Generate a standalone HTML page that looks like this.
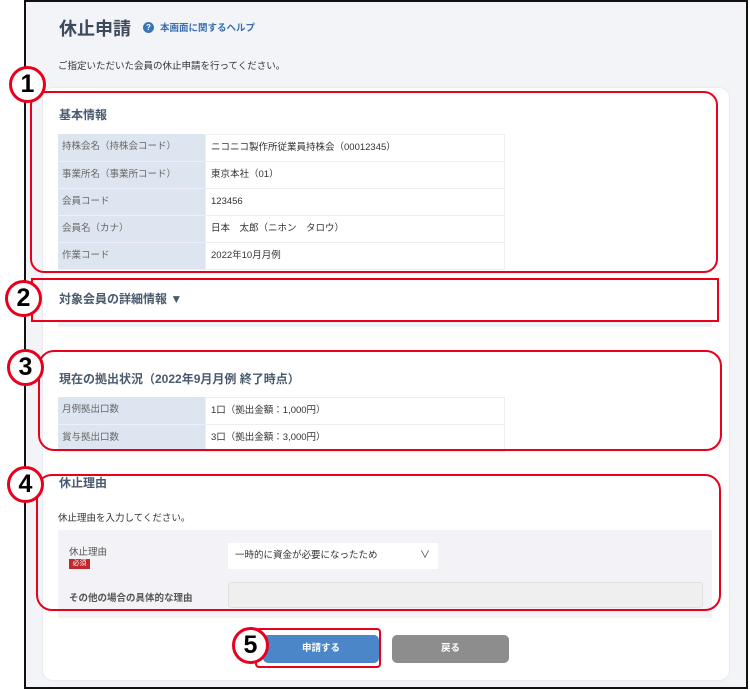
<!DOCTYPE html>
<html><head><meta charset="utf-8"><style>
*{margin:0;padding:0;box-sizing:border-box}
body{width:750px;height:690px;background:#fff;font-family:"Liberation Sans","Noto Sans CJK JP",sans-serif;position:relative;overflow:hidden;color:#333}
.a{position:absolute}
#frame{left:24px;top:0;width:724px;height:689px;border:2px solid #111;background:#f3f4f8}
.card{background:#fff;border-radius:10px;box-shadow:0 0 2px #ddd}
.t{font-size:10px;color:#333;white-space:nowrap}
.lab{background:#dde6f0;color:#666;font-size:9.5px;padding-left:4px;line-height:26px;border-bottom:1px solid #eef}
.val{background:#fff;font-size:9.5px;padding-left:5px;line-height:26px;border:1px solid #eceff2;border-top:none}
.r{position:absolute;border:2px solid #e8001c}
.c{position:absolute;width:37px;height:37px;border:3px solid #e8001c;border-radius:50%;background:#fff;font:bold 25px/31px "Liberation Sans",sans-serif;text-align:center;color:#000}
h2{font-size:12px;color:#4a5a6e;font-weight:bold;position:absolute;white-space:nowrap}
</style></head><body>
<div class="a" id="frame"></div>
<div class="a t" style="left:59px;top:15px;font-size:18px;color:#3c4a5c;font-weight:bold">休止申請</div>
<div class="a" style="left:143px;top:22px;width:11px;height:11px;border-radius:50%;background:#3a74b8;color:#fff;font-size:8px;line-height:11px;text-align:center;font-weight:bold">?</div>
<div class="a t" style="left:160px;top:20px;font-size:9.5px;color:#3a6fb0;font-weight:bold">本画面に関するヘルプ</div>
<div class="a t" style="left:58px;top:58px;font-size:9.5px">ご指定いただいた会員の休止申請を行ってください。</div>
<div class="a card" style="left:43px;top:88px;width:686px;height:592px"></div>
<div class="a" style="left:58px;top:322px;width:654px;height:5px;background:#f0f1f4"></div>
<h2 style="left:59px;top:106px">基本情報</h2>
<div class="a" style="left:58px;top:134px;width:447px">
<div style="display:flex"><div class="lab" style="width:147px">持株会名（持株会コード）</div><div class="val" style="width:300px;border-top:1px solid #eceff2">ニコニコ製作所従業員持株会（00012345）</div></div>
<div style="display:flex"><div class="lab" style="width:147px">事業所名（事業所コード）</div><div class="val" style="width:300px">東京本社（01）</div></div>
<div style="display:flex"><div class="lab" style="width:147px">会員コード</div><div class="val" style="width:300px">123456</div></div>
<div style="display:flex"><div class="lab" style="width:147px">会員名（カナ）</div><div class="val" style="width:300px">日本　太郎（ニホン　タロウ）</div></div>
<div style="display:flex"><div class="lab" style="width:147px">作業コード</div><div class="val" style="width:300px">2022年10月月例</div></div>
</div>
<h2 style="left:59px;top:290px">対象会員の詳細情報 ▼</h2>
<h2 style="left:59px;top:370px">現在の拠出状況（2022年9月月例 終了時点）</h2>
<div class="a" style="left:58px;top:397px;width:447px">
<div style="display:flex"><div class="lab" style="width:147px">月例拠出口数</div><div class="val" style="width:300px;border-top:1px solid #eceff2">1口（拠出金額：1,000円）</div></div>
<div style="display:flex"><div class="lab" style="width:147px">賞与拠出口数</div><div class="val" style="width:300px">3口（拠出金額：3,000円）</div></div>
</div>
<h2 style="left:59px;top:474px">休止理由</h2>
<div class="a t" style="left:58px;top:510px;font-size:9.5px">休止理由を入力してください。</div>
<div class="a" style="left:58px;top:530px;width:654px;height:88px;background:#f3f3f7"></div>
<div class="a t" style="left:69px;top:544px;font-size:9.5px;color:#555">休止理由</div>
<div class="a" style="left:69px;top:559px;width:21px;height:10px;background:#c0282d;color:#fff;font-size:7px;line-height:10px;text-align:center">必須</div>
<div class="a" style="left:228px;top:543px;width:210px;height:26px;background:#fff;font-size:9.5px;line-height:26px;padding-left:7px">一時的に資金が必要になったため<span style="position:absolute;right:8px;top:0;font-size:10px">∨</span></div>
<div class="a t" style="left:69px;top:590px;font-size:9.5px;color:#555;font-weight:bold">その他の場合の具体的な理由</div>
<div class="a" style="left:228px;top:582px;width:475px;height:26px;background:#efefef;border:1px solid #e0e0e0;border-radius:3px"></div>
<div class="a" style="left:263px;top:635px;width:116px;height:28px;background:#4a86c8;border-radius:5px;color:#fff;font-size:9.5px;line-height:28px;text-align:center;font-weight:bold">申請する</div>
<div class="a" style="left:392px;top:635px;width:117px;height:28px;background:#8d8d8d;border-radius:5px;color:#fff;font-size:9.5px;line-height:28px;text-align:center;font-weight:bold">戻る</div>
<div class="r" style="left:30px;top:91px;width:688px;height:182px;border-radius:14px"></div>
<div class="r" style="left:31px;top:278px;width:688px;height:44px"></div>
<div class="r" style="left:38px;top:350px;width:684px;height:101px;border-radius:16px"></div>
<div class="r" style="left:36px;top:474px;width:685px;height:137px;border-radius:16px"></div>
<div class="r" style="left:255px;top:628px;width:126px;height:40px;border-radius:4px"></div>
<div class="c" style="left:9px;top:66px">1</div>
<div class="c" style="left:5px;top:280px">2</div>
<div class="c" style="left:7px;top:349px">3</div>
<div class="c" style="left:7px;top:466px">4</div>
<div class="c" style="left:232px;top:627px">5</div>
</body></html>
